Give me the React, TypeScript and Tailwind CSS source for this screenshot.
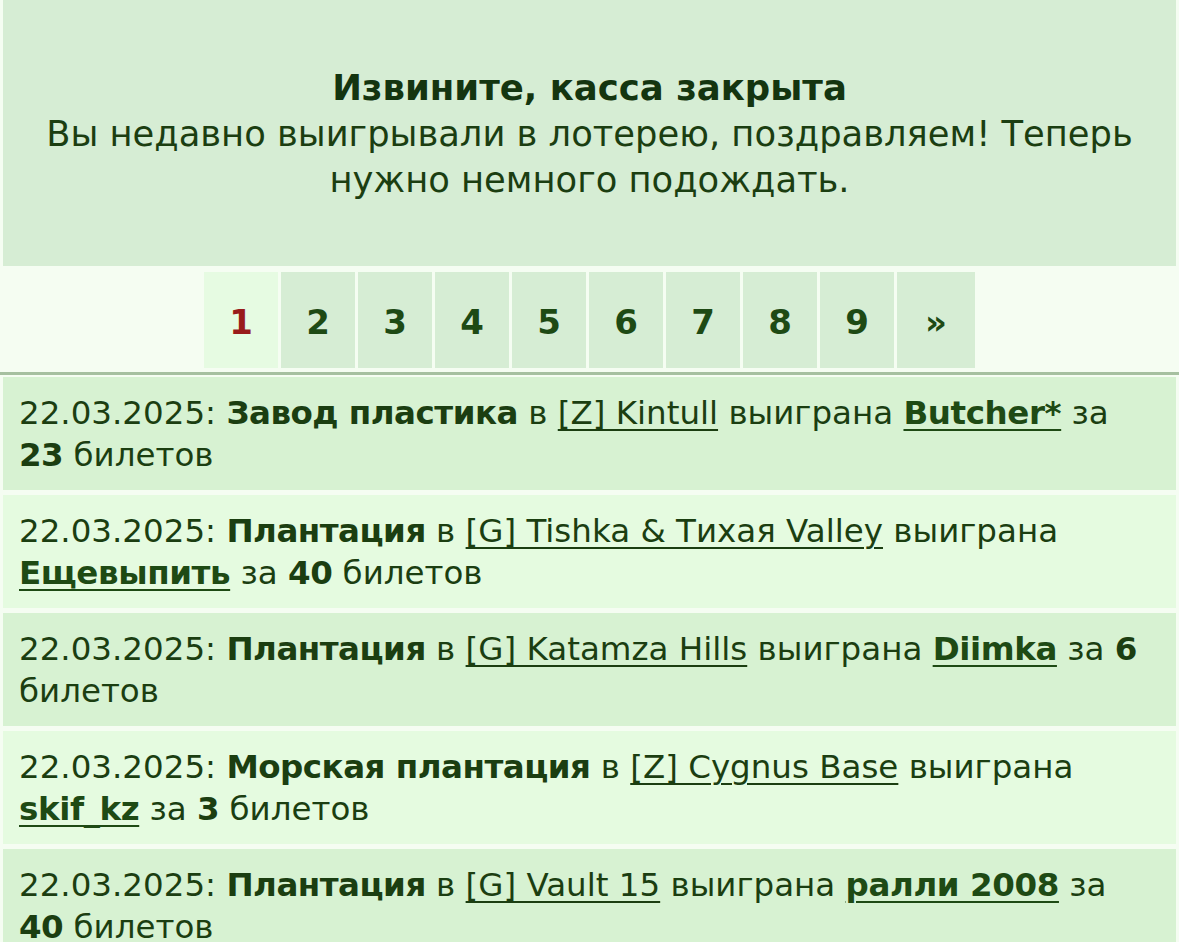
import React from 'react';

type Win = {
  date: string;
  building: string;
  base: string;
  winner: string;
  tickets: number;
};

const wins: Win[] = [
  { date: '22.03.2025', building: 'Завод пластика', base: '[Z] Kintull', winner: 'Butcher*', tickets: 23 },
  { date: '22.03.2025', building: 'Плантация', base: '[G] Tishka & Тихая Valley', winner: 'Ещевыпить', tickets: 40 },
  { date: '22.03.2025', building: 'Плантация', base: '[G] Katamza Hills', winner: 'Diimka', tickets: 6 },
  { date: '22.03.2025', building: 'Морская плантация', base: '[Z] Cygnus Base', winner: 'skif_kz', tickets: 3 },
  { date: '22.03.2025', building: 'Плантация', base: '[G] Vault 15', winner: 'ралли 2008', tickets: 40 },
];

const pages = ['1', '2', '3', '4', '5', '6', '7', '8', '9'];

const App: React.FC = () => {
  return (
    <div className="min-h-screen bg-[#f5fdf2] text-[#1b3e11] font-['DejaVu_Sans',Verdana,sans-serif]">
      {/* notice */}
      <div className="mx-[3px] bg-[#d6edd4] px-8 pt-[65px] pb-[63px] text-center">
        <div className="text-[35.5px] leading-[46px] font-bold text-[#143510]">Извините, касса закрыта</div>
        <div className="text-[35.3px] leading-[46px]">
          Вы недавно выигрывали в лотерею, поздравляем! Теперь нужно немного подождать.
        </div>
      </div>

      {/* pagination */}
      <div className="flex justify-center gap-[3px] pt-[6px] pb-[3px]">
        {pages.map((p, i) => (
          <a
            key={p}
            href="#"
            className={`flex h-[96px] w-[74px] items-center justify-center pt-[4px] text-[34px] font-bold ${
              i === 0 ? 'bg-[#e6fbe2] text-[#991b1b]' : 'bg-[#d6edd4] text-[#1e4a14]'
            }`}
          >
            {p}
          </a>
        ))}
        <a
          href="#"
          className="flex h-[96px] w-[78px] items-center justify-center bg-[#d6edd4] pt-[4px] text-[34px] font-bold text-[#1e4a14]"
        >
          »
        </a>
      </div>

      <div className="mt-[1px] h-[3px] bg-[#a6c0a0]" />

      {/* recent wins */}
      <div className="mt-[2px] flex flex-col gap-[5px] px-[3px]">
        {wins.map((w, i) => (
          <div
            key={i}
            className={`px-4 pt-[15px] pb-[14px] text-[32.5px] leading-[42px] ${
              i % 2 === 0 ? 'bg-[#d7f2d2]' : 'bg-[#e5fbe0]'
            }`}
          >
            {w.date}: <b className="tracking-[-0.5px]">{w.building}</b> в{' '}
            <a href="#" className="underline decoration-[1.5px] underline-offset-[5px]">
              {w.base}
            </a>{' '}
            выиграна{' '}
            <a
              href="#"
              className="font-bold tracking-[-0.4px] text-[#1e4a14] underline decoration-2 underline-offset-[5px]"
            >
              {w.winner}
            </a>{' '}
            за <b className="tracking-[-0.5px]">{w.tickets}</b> билетов
          </div>
        ))}
      </div>
    </div>
  );
};

export default App;
